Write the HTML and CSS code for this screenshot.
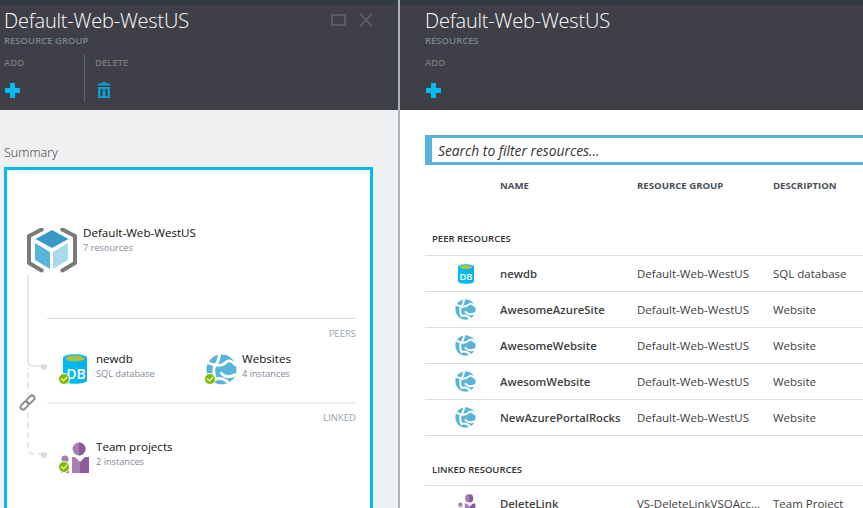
FILE: index.html
```html
<!DOCTYPE html>
<html lang="en">
    <head>
        <meta charset="UTF-8" />
        <title>Default-Web-WestUS</title>
        <link rel="stylesheet" href="styles.css">
    </head>
    <body>
        <svg class="defs" width="0" height="0">
            <symbol id="plus" viewBox="0 0 15 15">
                <path d="M5 0h5v5h5v5h-5v5h-5v-5h-5v-5h5z" fill="#00bcf2"/>
            </symbol>
            <symbol id="db" viewBox="0 0 24 30">
                <path d="M0 4c0-5 24-5 24 0v22c0 5-24 5-24 0z" fill="#00bcf2"/>
                <path d="M14 2c5 0 10 1 10 2v22c0 1.500-3 3-10 3.500z" fill="#1ba1e2" opacity=".35"/>
                <ellipse cx="12" cy="4.500" rx="9.500" ry="3" fill="#a9c23f"/>
            </symbol>
            <symbol id="globe" viewBox="0 0 32 32">
                <circle cx="16" cy="16" r="15.500" fill="#59b4d9"/>
                <path d="M2 9C9 12 16 13 20 9s8-1 11 3M14 0c-1 5-1 8-4 11M9 12c-2 6-1 10 1 14 5-2 11 0 14 5M31 21c-5 3-11 4-16-2" fill="none" stroke="#fff" stroke-width="3"/>
            </symbol>
            <symbol id="team" viewBox="0 0 32 32">
                <circle cx="21" cy="7" r="6.500" fill="#a67fb0"/>
                <path d="M21 .5a6.500 6.500 0 0 1 0 13z" fill="#8d5b9c"/>
                <path d="M14 15h3l5 5v11h-8z" fill="#a67fb0"/>
                <path d="M22 20l5-5h4v16h-9z" fill="#8d5b9c"/>
                <circle cx="7" cy="17" r="3.500" fill="#a67fb0"/>
                <path d="M3 22h8v9h-8z" fill="#a67fb0"/>
            </symbol>
        </svg>

        <div class="blades">
            <section class="blade blade-summary">
                <header class="blade-head">
                    <div class="window-btns">
                        <span class="btn-max"></span>
                        <svg width="14" height="14" viewBox="0 0 14 14"><path d="M1 1l12 12M13 1l-12 12" stroke="#5c5d63" stroke-width="1.800"/></svg>
                    </div>
                    <h1>Default-Web-WestUS</h1>
                    <div class="subtitle">RESOURCE GROUP</div>
                    <div class="commands">
                        <div class="command command-add">
                            <span>ADD</span>
                            <svg class="cmd-icon" width="15" height="15"><use href="#plus"/></svg>
                        </div>
                        <div class="command command-delete">
                            <span>DELETE</span>
                            <svg class="cmd-icon" width="12" height="16" viewBox="0 0 12 16">
                                <path d="M4 0h4v1.500h4v2h-12v-2h4zM0 5h12v11h-12zM2.500 7v7h2v-7zM7.500 7v7h2v-7z" fill="#0d9ccc" fill-rule="evenodd"/>
                            </svg>
                        </div>
                    </div>
                </header>
                <div class="blade-body">
                    <h2>Summary</h2>
                    <div class="summary-card">
                        <div class="tree-line line-peers"></div>
                        <div class="tree-line line-linked"></div>
                        <span class="tree-dot dot-peers"></span>
                        <span class="tree-dot dot-linked"></span>
                        <svg class="link-icon" width="17" height="17" viewBox="0 0 17 17">
                            <g fill="none" stroke="#8f8f8f" stroke-width="2">
                                <rect x="-4.500" y="-2.500" width="9" height="5" rx="2.500" transform="translate(5.500 11.500) rotate(-45)"/>
                                <rect x="-4.500" y="-2.500" width="9" height="5" rx="2.500" transform="translate(11.500 5.500) rotate(-45)"/>
                            </g>
                        </svg>

                        <div class="group-row">
                            <svg class="group-icon" width="50" height="45" viewBox="0 0 50 45">
                                <path d="M14.700 1.500L2 8v27l12.700 7.500M35.300 1.500L48 8v27l-12.700 7.500" fill="none" stroke="#7a7a7a" stroke-width="4" stroke-linecap="round" stroke-linejoin="round"/>
                                <path d="M25 2l16.500 9-16.500 9-16.500-9z" fill="#3999c6"/>
                                <path d="M8 15l15 9v17l-15-9z" fill="#59b4d9"/>
                                <path d="M41 15l-15 9v17l15-9z" fill="#a9d9ec"/>
                            </svg>
                            <div class="item-text">
                                <div class="item-name">Default-Web-WestUS</div>
                                <div class="item-sub">7 resources</div>
                            </div>
                        </div>

                        <div class="section section-peers">
                            <div class="section-label">PEERS</div>
                            <div class="tiles">
                                <div class="tile">
                                    <div class="tile-icon">
                                        <svg class="icon-db" width="24" height="30" viewBox="0 0 24 30">
                                            <use href="#db" width="24" height="30"/>
                                            <text x="13" y="25" class="db-text">DB</text>
                                        </svg>
                                        <span class="status"></span>
                                    </div>
                                    <div class="item-text">
                                        <div class="item-name">newdb</div>
                                        <div class="item-sub">SQL database</div>
                                    </div>
                                </div>
                                <div class="tile">
                                    <div class="tile-icon">
                                        <svg class="icon-globe" width="31" height="31"><use href="#globe"/></svg>
                                        <span class="status"></span>
                                    </div>
                                    <div class="item-text">
                                        <div class="item-name">Websites</div>
                                        <div class="item-sub">4 instances</div>
                                    </div>
                                </div>
                            </div>
                        </div>

                        <div class="section section-linked">
                            <div class="section-label">LINKED</div>
                            <div class="tiles">
                                <div class="tile">
                                    <div class="tile-icon">
                                        <svg width="32" height="32"><use href="#team"/></svg>
                                        <span class="status"></span>
                                    </div>
                                    <div class="item-text">
                                        <div class="item-name">Team projects</div>
                                        <div class="item-sub">2 instances</div>
                                    </div>
                                </div>
                            </div>
                        </div>
                    </div>
                </div>
            </section>

            <section class="blade blade-resources">
                <header class="blade-head">
                    <h1>Default-Web-WestUS</h1>
                    <div class="subtitle">RESOURCES</div>
                    <div class="commands">
                        <div class="command command-add">
                            <span>ADD</span>
                            <svg class="cmd-icon" width="15" height="15"><use href="#plus"/></svg>
                        </div>
                    </div>
                </header>
                <div class="resources-body">
                    <div class="search"><span>Search to filter resources...</span></div>
                    <div class="res-columns">
                        <span></span><span>NAME</span><span>RESOURCE GROUP</span><span>DESCRIPTION</span>
                    </div>
                    <div class="res-heading">PEER RESOURCES</div>
                    <div class="res-row">
                        <svg class="res-icon" width="16" height="20" viewBox="0 0 24 30">
                            <use href="#db" width="24" height="30"/>
                            <text x="12" y="24" class="db-text">DB</text>
                        </svg>
                        <b>newdb</b><span>Default-Web-WestUS</span><span>SQL database</span>
                    </div>
                    <div class="res-row">
                        <svg class="res-icon" width="21" height="21"><use href="#globe"/></svg>
                        <b>AwesomeAzureSite</b><span>Default-Web-WestUS</span><span>Website</span>
                    </div>
                    <div class="res-row">
                        <svg class="res-icon" width="21" height="21"><use href="#globe"/></svg>
                        <b>AwesomeWebsite</b><span>Default-Web-WestUS</span><span>Website</span>
                    </div>
                    <div class="res-row">
                        <svg class="res-icon" width="21" height="21"><use href="#globe"/></svg>
                        <b>AwesomWebsite</b><span>Default-Web-WestUS</span><span>Website</span>
                    </div>
                    <div class="res-row">
                        <svg class="res-icon" width="21" height="21"><use href="#globe"/></svg>
                        <b>NewAzurePortalRocks</b><span>Default-Web-WestUS</span><span>Website</span>
                    </div>
                    <div class="res-heading res-heading-linked">LINKED RESOURCES</div>
                    <div class="res-row">
                        <svg class="res-icon" width="20" height="20"><use href="#team"/></svg>
                        <b>DeleteLink</b><span>VS-DeleteLinkVSOAcc...</span><span>Team Project</span>
                    </div>
                </div>
            </section>
        </div>
    </body>
</html>
```

FILE: styles.css
```css
html,
body {
    height: 100%;
}
body {
    margin: 0;
    overflow: hidden;
    background-color: #ffffff;
    font-family: "Open Sans", "Noto Sans", sans-serif;
    color: #222222;
}
.defs {
    position: absolute;
}
.db-text {
    font-family: "Open Sans", sans-serif;
    font-size: 14px;
    font-weight: 600;
    fill: #ffffff;
    text-anchor: middle;
}
.blades {
    display: flex;
    height: 508px;
    overflow: hidden;
}
.blade {
    flex: none;
    display: flex;
    flex-direction: column;
}
.blade-summary {
    width: 398px;
    background-color: #eff0f2;
    border-right: 2px solid #a9b4c0;
}
.blade-resources {
    width: 463px;
}
.blade-head {
    position: relative;
    flex: none;
    box-sizing: border-box;
    height: 110px;
    padding-left: 4px;
    border-top: 5px solid #323b45;
    background-color: #3f4047;
    color: #ffffff;
}
.blade-resources .blade-head {
    padding-left: 25px;
}
h1 {
    margin: 0;
    padding-top: 2px;
    font-size: 20px;
    line-height: 27px;
    font-weight: 300;
    letter-spacing: -0.2px;
}
.subtitle {
    font-size: 9.500px;
    line-height: 14px;
    font-weight: 600;
    color: #768493;
}
.window-btns {
    position: absolute;
    top: 8px;
    left: 331px;
    display: flex;
    align-items: center;
    gap: 13px;
}
.btn-max {
    box-sizing: border-box;
    width: 15px;
    height: 12px;
    border: 2px solid #5c5d63;
}
.commands {
    display: flex;
    margin-top: 6px;
}
.command {
    display: flex;
    flex-direction: column;
    box-sizing: border-box;
    height: 48px;
    padding-top: 2px;
    font-size: 9.500px;
    line-height: 14px;
    font-weight: 600;
    color: #77787e;
}
.command-add {
    width: 80px;
}
.command-delete {
    padding-left: 10px;
    border-left: 1px solid #5f646c;
}
.cmd-icon {
    margin-top: 13px;
    margin-left: 1px;
}
.command-delete .cmd-icon {
    margin-top: 12px;
    margin-left: 3px;
}
.blade-body {
    padding: 33px 25px 0 4px;
}
h2 {
    margin: 0 0 5px;
    padding-top: 1px;
    font-size: 12.600px;
    line-height: 18px;
    font-weight: 300;
    color: #333333;
}
.summary-card {
    position: relative;
    box-sizing: border-box;
    width: 369px;
    height: 360px;
    padding: 53px 14px 0 20px;
    border: 3px solid #00bcf2;
    background-color: #ffffff;
}
.tree-line {
    position: absolute;
    left: 20px;
    width: 14px;
    border-left: 2px solid #e6e6e6;
    border-bottom: 2px solid #e6e6e6;
    border-bottom-left-radius: 6px;
}
.line-peers {
    top: 105px;
    height: 90px;
}
.line-linked {
    top: 198px;
    height: 85px;
    border-left-style: dashed;
    border-bottom-style: dashed;
}
.tree-dot {
    position: absolute;
    left: 34px;
    width: 6px;
    height: 6px;
    border-radius: 50%;
    background-color: #d8dde3;
}
.dot-peers {
    top: 194px;
}
.dot-linked {
    top: 282px;
}
.link-icon {
    position: absolute;
    left: 12px;
    top: 224px;
    background-color: #ffffff;
}
.group-row {
    display: flex;
    gap: 6px;
}
.group-icon {
    flex: none;
    margin-top: 5px;
}
.item-text {
    padding-top: 2px;
}
.item-name {
    font-size: 11.600px;
    line-height: 16px;
    color: #111111;
}
.item-sub {
    font-size: 9.200px;
    line-height: 14px;
    color: #7f8c9a;
}
.section {
    margin-left: 20px;
    border-top: 1px solid #dcdcdc;
}
.section-peers {
    margin-top: 45px;
    height: 83px;
}
.section-linked {
    border-top: 2px solid #eeeeee;
}
.section-label {
    padding: 9px 0 0 0;
    text-align: right;
    font-size: 9.500px;
    line-height: 12px;
    color: #9aa3ad;
}
.section-linked .section-label {
    padding-top: 8px;
}
.tiles {
    display: flex;
    margin-top: 11px;
    margin-left: 11px;
}
.section-linked .tiles {
    margin-top: 15px;
}
.tile {
    display: flex;
    gap: 4px;
    width: 146px;
}
.tile .item-text {
    padding-top: 0;
}
.tile-icon {
    position: relative;
    flex: none;
    display: flex;
    align-items: flex-start;
    width: 34px;
    height: 30px;
    margin-top: 3px;
}
.icon-db {
    margin-left: 5px;
}
.icon-globe {
    margin-left: 2px;
}
.status {
    position: absolute;
    left: 0;
    bottom: -1px;
    box-sizing: border-box;
    width: 12px;
    height: 12px;
    border-radius: 50%;
    background-color: #7fba00;
    border: 1px solid #ffffff;
}
.status::after {
    content: "";
    position: absolute;
    left: 2px;
    top: 1.500px;
    width: 5px;
    height: 2.500px;
    border-left: 1.500px solid #ffffff;
    border-bottom: 1.500px solid #ffffff;
    transform: rotate(-45deg);
}
.resources-body {
    padding: 25px 0 0 25px;
}
.search {
    box-sizing: border-box;
    width: 460px;
    height: 30px;
    padding-left: 6px;
    border: 3px solid #59b4d9;
    border-left-width: 7px;
    font-size: 13.800px;
    line-height: 25px;
    font-style: italic;
    color: #333333;
}
.res-columns,
.res-row {
    display: grid;
    grid-template-columns: 75px 137px 136px 130px;
    align-items: center;
    width: 438px;
    font-size: 11.500px;
}
.res-columns {
    height: 40px;
    font-size: 9.600px;
    font-weight: 700;
    color: #4a4f57;
}
.res-heading {
    box-sizing: border-box;
    height: 51px;
    padding: 27px 0 0 7px;
    border-bottom: 1px solid #dcdcdc;
    font-size: 9.500px;
    line-height: 14px;
    font-weight: 600;
    color: #333333;
}
.res-heading-linked {
    height: 50px;
}
.res-row {
    height: 36px;
    box-sizing: border-box;
    border-bottom: 1px solid #dcdcdc;
    color: #404040;
    white-space: nowrap;
}
.res-row b {
    font-size: 11.300px;
    font-weight: 600;
}
.res-icon {
    justify-self: center;
    margin-left: 6px;
}
```
